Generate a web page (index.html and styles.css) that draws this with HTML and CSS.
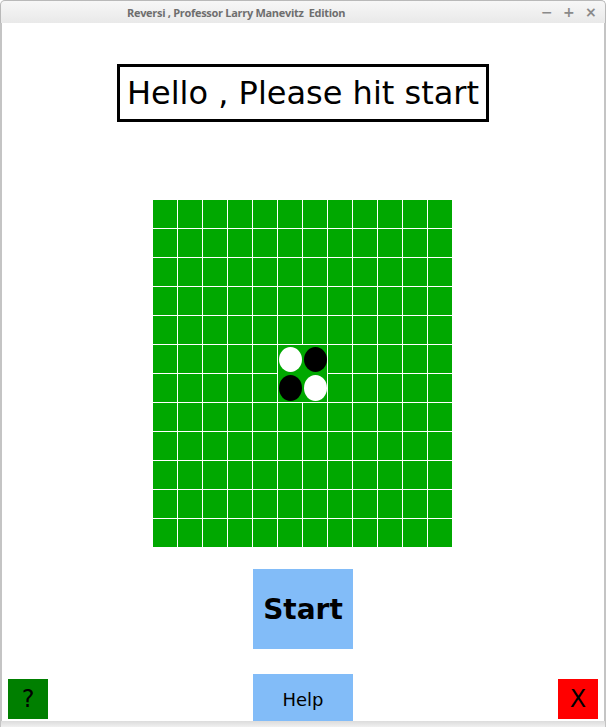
FILE: index.html
```html
<!DOCTYPE html>
<html>
<head>
<meta charset="utf-8">
<link rel="stylesheet" href="styles.css">
</head>
<body>
<div class="window">
  <div class="titlebar">
    <span class="title">Reversi , Professor Larry Manevitz&nbsp; Edition</span>
    <div class="controls">
      <span class="ctl">&minus;</span>
      <span class="ctl">+</span>
      <span class="ctl">&times;</span>
    </div>
  </div>
  <div class="content">
    <div class="message">Hello , Please hit start</div>
    <div class="board" id="board"></div>
    <div class="start">Start</div>
    <div class="bottom">
      <div class="help-q">?</div>
      <div class="help">Help</div>
      <div class="quit">X</div>
    </div>
  </div>
  <div class="frame-bottom"></div>
</div>
<script src="script.js"></script>
</body>
</html>
```
FILE: script.js
```js
var board = document.getElementById('board');
for (var r = 0; r < 12; r++) {
  for (var c = 0; c < 12; c++) {
    if ((r === 5 || r === 6) && (c === 5 || c === 6)) continue;
    var d = document.createElement('div');
    d.className = 'cell';
    board.appendChild(d);
  }
}
var center = document.createElement('div');
center.className = 'center';
center.innerHTML = '<div class="disc white top"></div><div class="disc black top"></div>' +
  '<div class="disc black bot"></div><div class="disc white bot"></div>';
board.appendChild(center);
```
FILE: styles.css
```css
html, body {
  margin: 0;
  padding: 0;
  background: #ffffff;
}
.window {
  width: 606px;
  height: 727px;
  display: flex;
  flex-direction: column;
  overflow: hidden;
  font-family: "DejaVu Sans", sans-serif;
}
.titlebar {
  height: 23px;
  flex: 0 0 23px;
  display: flex;
  align-items: center;
  background: linear-gradient(#f7f7f7, #e9e9e9);
  border: 1px solid #b9b9b9;
  border-bottom: none;
  border-radius: 5px 5px 0 0;
  box-sizing: border-box;
}
.title {
  margin-left: 126px;
  font-family: "Open Sans", "Noto Sans", sans-serif;
  font-weight: 700;
  font-size: 11px;
  letter-spacing: -0.3px;
  color: #6e6e6e;
  white-space: pre;
}
.controls {
  margin-left: auto;
  margin-right: 9px;
  display: flex;
  gap: 11px;
  color: #8a8a8a;
  font-family: "DejaVu Sans", sans-serif;
  font-size: 14px;
  font-weight: 700;
}
.ctl {
  width: 11px;
  text-align: center;
}
.content {
  flex: 1 1 auto;
  min-height: 0;
  display: flex;
  flex-direction: column;
  align-items: center;
  border-left: 2px solid #c4c4c4;
  border-right: 2px solid #c4c4c4;
  overflow: hidden;
  background: #ffffff;
}
.content > * {
  flex-shrink: 0;
}
.message {
  margin-top: 41px;
  width: 372px;
  height: 58px;
  box-sizing: border-box;
  border: 3px solid #000;
  font-size: 32px;
  line-height: 52px;
  text-align: center;
  color: #000;
}
.board {
  margin-top: 78px;
  margin-right: 1px;
  display: grid;
  grid-template-columns: repeat(12, 24px);
  grid-template-rows: repeat(12, 28px);
  gap: 1px;
  background: #ffffff;
}
.cell {
  background: #00a800;
}
.center {
  grid-column: 6 / 8;
  grid-row: 6 / 8;
  background: #00a800;
  display: grid;
  grid-template-columns: 25px 24px;
  grid-template-rows: 29px 28px;
}
.disc {
  width: 23px;
  margin-left: 1px;
  border-radius: 50%;
}
.disc.top {
  height: 25px;
  margin-top: 2px;
}
.disc.bot {
  height: 26px;
  margin-top: 1px;
}
.white { background: #ffffff; }
.black { background: #000000; }
.start {
  margin-top: 22px;
  width: 100px;
  height: 80px;
  background: #82bcf8;
  display: flex;
  align-items: center;
  justify-content: center;
  font-weight: 700;
  font-size: 28px;
  color: #000;
}
.bottom {
  margin-top: 25px;
  align-self: stretch;
  display: flex;
  justify-content: space-between;
  align-items: flex-start;
  padding: 0 6px;
}
.help-q, .quit {
  margin-top: 5px;
  width: 40px;
  height: 40px;
  display: flex;
  align-items: center;
  justify-content: center;
  font-size: 24px;
  color: #000;
}
.help-q { background: #007f00; }
.quit { background: #ff0000; }
.help {
  width: 100px;
  height: 50px;
  background: #82bcf8;
  display: flex;
  align-items: center;
  justify-content: center;
  font-size: 18px;
  color: #000;
}
.frame-bottom {
  flex: 0 0 6px;
  background: linear-gradient(#dcdcdc, #f0f0f0);
  border-left: 1px solid #c4c4c4;
  border-right: 1px solid #c4c4c4;
}
```
